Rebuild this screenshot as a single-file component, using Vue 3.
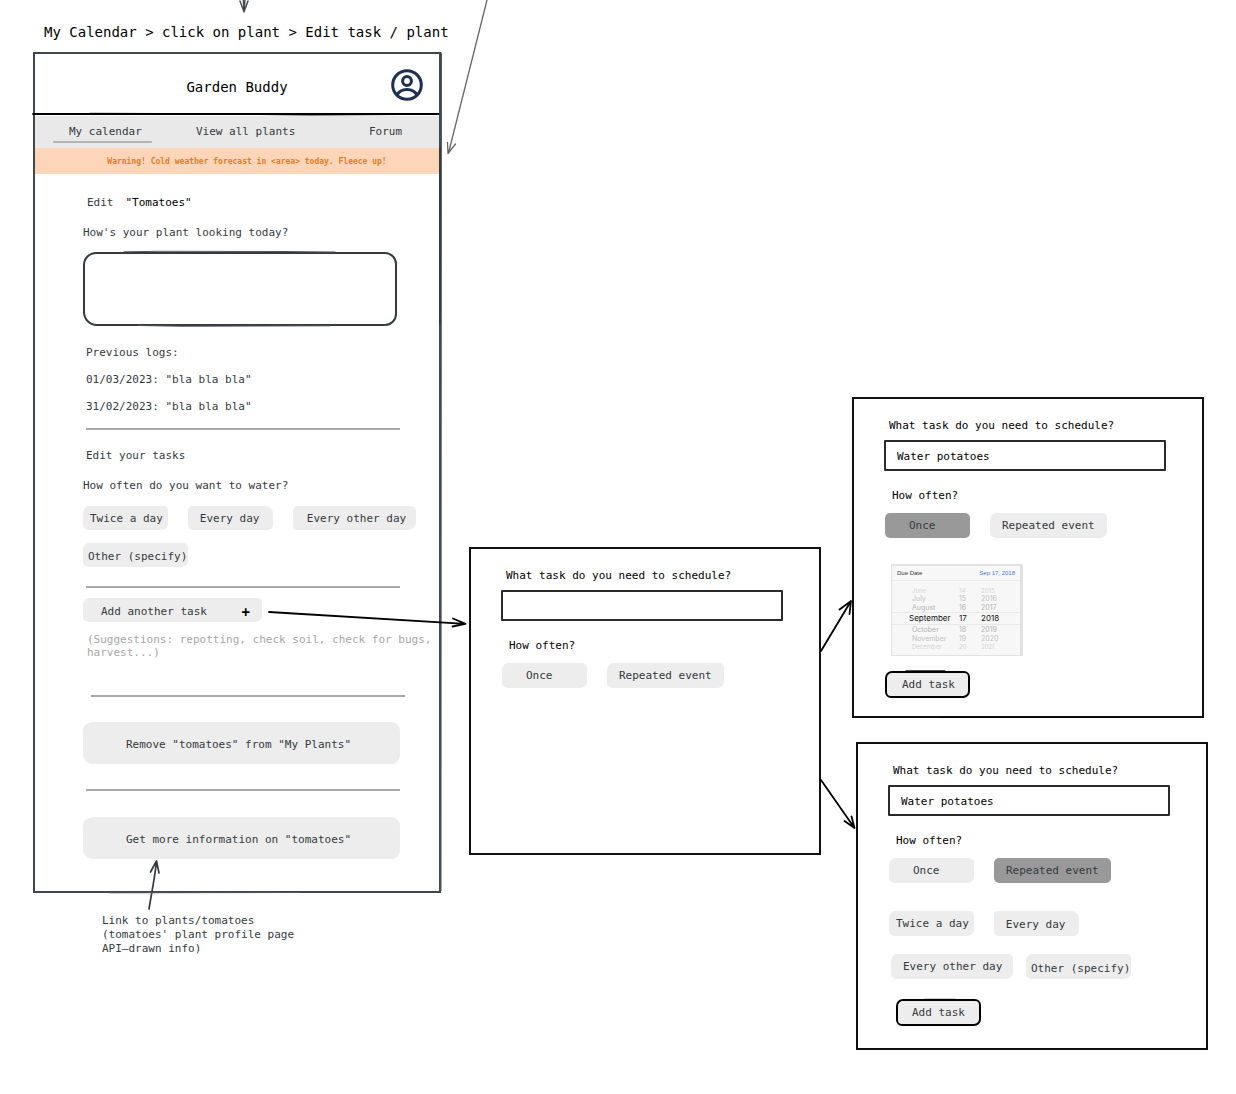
<script setup>
import { ref } from 'vue'

const logs = ['01/03/2023: "bla bla bla"', '31/02/2023: "bla bla bla"']
const log = ref('')
const emptyTask = ref('')
const onceTask = ref('Water potatoes')
const repeatTask = ref('Water potatoes')

const dates = [
  { m: 'June', d: '14', y: '2015', c: 'edge' },
  { m: 'July', d: '15', y: '2016', c: 'far' },
  { m: 'August', d: '16', y: '2017', c: 'near' },
  { m: 'September', d: '17', y: '2018', c: 'picked' },
  { m: 'October', d: '18', y: '2019', c: 'near' },
  { m: 'November', d: '19', y: '2020', c: 'far' },
  { m: 'December', d: '20', y: '2021', c: 'edge' }
]
</script>

<template>
  <main class="board">
    <section class="column first">
      <h1 class="flow-title">My Calendar &gt; click on plant &gt; Edit task / plant</h1>

      <article class="phone">
        <header class="top">
          <h2>Garden Buddy</h2>
          <button class="avatar" aria-label="Account">
            <svg width="32" height="32" viewBox="0 0 32 32" fill="none" stroke="#1d2f52" stroke-width="3">
              <circle cx="16" cy="16" r="14.3" />
              <circle cx="16" cy="12" r="4.4" />
              <path d="M6 26.3C7.8 22.4 11.3 20.6 16 20.6S24.2 22.4 26 26.3" />
            </svg>
          </button>
        </header>
        <nav class="tabs">
          <a href="#calendar" class="current">My calendar</a>
          <a href="#plants">View all plants</a>
          <a href="#forum">Forum</a>
        </nav>
        <p class="warning">Warning! Cold weather forecast in &lt;area&gt; today. Fleece up!</p>

        <div class="body">
          <h3 class="edit"><span>Edit</span><strong>"Tomatoes"</strong></h3>
          <label class="question" for="log">How's your plant looking today?</label>
          <textarea id="log" v-model="log"></textarea>

          <div class="logs">
            <p>Previous logs:</p>
            <p v-for="l in logs" :key="l">{{ l }}</p>
          </div>
          <hr class="after-logs" />

          <h3 class="tasks">Edit your tasks</h3>
          <p class="question">How often do you want to water?</p>
          <div class="chips">
            <button class="chip">Twice a day</button>
            <button class="chip day">Every day</button>
            <button class="chip other-day">Every other day</button>
            <button class="chip specify">Other (specify)</button>
          </div>
          <hr class="after-chips" />

          <button class="chip add-another"><span>Add another task</span><b>+</b></button>
          <p class="hint">(Suggestions: repotting, check soil, check for bugs, harvest...)</p>
          <hr class="after-hint" />
          <button class="chip large">Remove "tomatoes" from "My Plants"</button>
          <hr class="between" />
          <button class="chip large">Get more information on "tomatoes"</button>
        </div>
      </article>

      <p class="note">Link to plants/tomatoes<br />(tomatoes' plant profile page<br />API–drawn info)</p>
    </section>

    <section class="column second">
      <form class="dialog" @submit.prevent>
        <label for="task-a">What task do you need to schedule?</label>
        <input id="task-a" v-model="emptyTask" type="text" />
        <p class="often">How often?</p>
        <div class="choice">
          <button type="button" class="chip once">Once</button>
          <button type="button" class="chip repeat">Repeated event</button>
        </div>
      </form>
    </section>

    <section class="column third">
      <form class="dialog tall" @submit.prevent>
        <label for="task-b">What task do you need to schedule?</label>
        <input id="task-b" v-model="onceTask" type="text" />
        <p class="often">How often?</p>
        <div class="choice">
          <button type="button" class="chip once on" aria-pressed="true">Once</button>
          <button type="button" class="chip repeat">Repeated event</button>
        </div>
        <div class="picker">
          <div class="due"><span>Due Date</span><span class="value">Sep 17, 2018</span></div>
          <div class="wheel">
            <div v-for="r in dates" :key="r.m" class="date" :class="r.c">
              <span>{{ r.m }}</span><span>{{ r.d }}</span><span>{{ r.y }}</span>
            </div>
          </div>
        </div>
        <button class="chip add">Add task</button>
      </form>

      <form class="dialog lower" @submit.prevent>
        <label for="task-c">What task do you need to schedule?</label>
        <input id="task-c" v-model="repeatTask" type="text" />
        <p class="often">How often?</p>
        <div class="choice">
          <button type="button" class="chip once">Once</button>
          <button type="button" class="chip repeat on" aria-pressed="true">Repeated event</button>
        </div>
        <div class="choice interval">
          <button type="button" class="chip">Twice a day</button>
          <button type="button" class="chip day">Every day</button>
        </div>
        <div class="choice interval-more">
          <button type="button" class="chip every-other">Every other day</button>
          <button type="button" class="chip specify">Other (specify)</button>
        </div>
        <button class="chip add">Add task</button>
      </form>
    </section>

    <svg class="arrows" width="1236" height="1094" viewBox="0 0 1236 1094" fill="none" stroke-linecap="round" stroke-linejoin="round" aria-hidden="true">
      <g stroke="#444a50" stroke-width="1.4">
        <path d="M243.300 0 244 12M245 0 244 12M240 1 244 12 248 1" />
      </g>
      <g stroke="#666" stroke-width="1.3">
        <path d="M487 0 448.500 153M447.500 142.500 448 153.500 455.500 144" />
      </g>
      <g stroke="#343a40" stroke-width="1.7">
        <path d="M149 909C151 896 155 877 156.500 861M150.500 872 156.500 861 159 873" />
        <path d="M440 148V324" />
      </g>
      <g stroke="#50565c" stroke-width="1">
        <path d="M441.500 53 441 891" />
        <path d="M110 892.800 300 892.500" />
        <path d="M124 251.800 158 251.300 285 251.500 335 252" />
        <path d="M138 325.500 182 326.300 330 325.800" />
      </g>
      <g stroke="#000" stroke-width="1.8">
        <path d="M269 612 465 623.800M453 618.500 465.500 623.800 452.500 626.500" />
        <path d="M821 651 851 601M839.500 609.500 851 601 849.500 614" />
        <path d="M821 780 854.500 828M844.500 821 854.500 828 851.500 816.500" />
        <path d="M33 114H38" />
        <path d="M940 717.500H1120" stroke-width="1" />
        <path d="M90 113.300 160 113.500 310 115 400 114.500" stroke-width="1" />
        <path d="M906 670.800H945M915 697.500H950M915 1025.500H955M925 999.300H955" stroke-width="1" />
      </g>
    </svg>
  </main>
</template>

<style>
body {
  margin: 0;
  background: #fff;
}
</style>

<style scoped>
.board {
  position: relative;
  display: flex;
  align-items: flex-start;
  min-height: 100vh;
  padding-left: 33px;
  box-sizing: border-box;
  overflow: hidden;
  color: #343a40;
  font: 11px/14px "DejaVu Sans Mono", "Liberation Mono", monospace;
}
.board * {
  box-sizing: border-box;
}
h1, h2, h3, p {
  margin: 0;
  font-size: inherit;
  font-weight: 400;
}
button, input, textarea {
  font: inherit;
  color: inherit;
}
.column {
  flex: none;
}
.first {
  width: 408px;
  padding-top: 24px;
}
.second {
  width: 352px;
  margin-left: 28px;
  padding-top: 547px;
}
.third {
  width: 356px;
  margin-left: 31px;
  padding-top: 397px;
}
.flow-title {
  margin: 0 0 12px;
  padding-left: 11px;
  color: #000;
  font-size: 14px;
  line-height: 16px;
  white-space: nowrap;
}

.phone {
  border: 2px solid #41474d;
  background: #fff;
}
.top {
  position: relative;
  display: flex;
  align-items: center;
  justify-content: center;
  height: 61px;
  padding-top: 6px;
  border-bottom: 2px solid #000;
  color: #000;
}
.top h2 {
  font-size: 14px;
  line-height: 16px;
}
.avatar {
  position: absolute;
  top: 15px;
  right: 16px;
  height: 32px;
  padding: 0;
  border: 0;
  background: none;
}
.avatar svg {
  display: block;
}
.tabs {
  display: grid;
  grid-template-columns: 127fr 173fr 86fr;
  justify-items: start;
  height: 32px;
  margin-top: 1px;
  padding: 9px 0 0 18px;
  background: #e9e9e9;
}
.tabs a {
  height: 18px;
  padding: 0 10px 0 16px;
  color: inherit;
  text-decoration: none;
  white-space: nowrap;
}
.tabs .current {
  border-bottom: 2px solid #b4b4b4;
  border-radius: 1px;
}
.warning {
  height: 26px;
  padding-left: 20px;
  background: #fdd6ba;
  color: #e67a1c;
  font-size: 8px;
  font-weight: 700;
  line-height: 28px;
  text-align: center;
}
.body {
  display: flex;
  flex-direction: column;
  align-items: flex-start;
  padding: 22px 0 32px 48px;
}
.edit {
  display: flex;
  gap: 12px;
  padding-left: 4px;
}
.edit strong {
  color: #000;
  font-weight: 400;
}
.question {
  margin-top: 16px;
}
textarea {
  width: 314px;
  height: 74px;
  margin-top: 12px;
  border: 2px solid #343a40;
  border-radius: 13px 12px 12px 14px;
  background: #fff;
  resize: none;
}
.logs {
  display: grid;
  gap: 13px;
  margin-top: 20px;
  padding-left: 3px;
}
hr {
  width: 314px;
  height: 2px;
  margin: 0 0 0 3px;
  border: 0;
  background: #a9a9a9;
}
.after-logs {
  margin-top: 14px;
}
.tasks {
  margin-top: 19px;
  padding-left: 3px;
}
.chips {
  display: flex;
  flex-wrap: wrap;
  gap: 13px 20px;
  margin-top: 13px;
}
.chip {
  height: 24px;
  padding: 1px 5px 0 7px;
  border: 0;
  border-radius: 6px 5px 7px 6px / 7px 4px 6px 5px;
  background: #ededed;
  text-align: left;
  white-space: nowrap;
}
.chip.day {
  width: 85px;
  padding: 2px 12px 0;
  border-radius: 4px 8px 5px 5px;
}
.chip.other-day {
  width: 123px;
  padding: 1px 9px 0 14px;
  border-radius: 5px 6px 8px 4px;
}
.chip.specify {
  width: 105px;
  padding: 4px 1px 0 5px;
}
.after-chips {
  margin-top: 19px;
}
.add-another {
  display: flex;
  align-items: center;
  justify-content: space-between;
  width: 179px;
  margin-top: 10px;
  padding: 3px 12px 0 18px;
}
.add-another b {
  color: #000;
  font-size: 14px;
}
.hint {
  width: 350px;
  margin-top: 11px;
  padding-left: 4px;
  color: #a6a6a6;
  line-height: 13px;
}
.after-hint {
  margin: 36px 0 25px 8px;
}
.large {
  width: 317px;
  height: 42px;
  padding: 3px 6px 0 0;
  border-radius: 12px 9px 8px 9px / 8px 9px 9px 10px;
  text-align: center;
}
.between {
  margin-top: 25px;
  margin-bottom: 26px;
}
.note {
  margin: 21px 0 0 69px;
}

.dialog {
  display: flex;
  flex-direction: column;
  align-items: flex-start;
  width: 352px;
  min-height: 308px;
  padding: 20px 30px 18px;
  border: 2px solid #111;
  background: #fff;
  color: #000;
}
.dialog label {
  padding-left: 5px;
}
.dialog input {
  width: 282px;
  height: 31px;
  margin-top: 7px;
  padding: 2px 11px 0;
  border: 2px solid #2b2b2b;
  border-radius: 1px;
  background: #fff;
}
.often {
  margin-top: 18px;
  padding-left: 8px;
}
.choice {
  display: flex;
  gap: 20px;
  margin-top: 10px;
  padding-left: 1px;
}
.dialog .chip {
  height: 25px;
  color: #343a40;
}
.once {
  width: 85px;
  padding-left: 24px;
}
.repeat {
  width: 117px;
  padding-left: 12px;
}
.dialog .on {
  background: #999;
  border-radius: 5px;
}
.picker {
  width: 132px;
  height: 92px;
  margin: 26px 0 0 7px;
  border: solid #e2e2e2;
  border-width: 2px 3px 1px 1px;
  background: #f7f7f7;
  color: #333;
  font: 6px/14px "Liberation Sans", Inter, sans-serif;
}
.due {
  display: flex;
  justify-content: space-between;
  height: 15px;
  padding: 0 5px;
  border-bottom: 1px solid #ececec;
}
.due .value {
  color: #3b7dd8;
}
.wheel {
  padding-top: 6px;
  font-family: Inter, "Liberation Sans", sans-serif;
}
.date {
  display: grid;
  grid-template-columns: 36px 30px 1fr;
  height: 9px;
  padding-left: 20px;
  overflow: hidden;
  color: #b5b5b5;
  font-size: 7px;
  line-height: 9px;
}
.date span:nth-child(2) {
  padding-left: 11px;
}
.date span:nth-child(3) {
  padding-left: 3px;
}
.date.edge {
  height: 7px;
  color: #d4d4d4;
  font-size: 6px;
  line-height: 7px;
}
.date.far {
  color: #c2c2c2;
}
.date.picked {
  grid-template-columns: 39px 30px 1fr;
  height: 13px;
  padding-left: 17px;
  border: solid #e8e8e8;
  border-width: 1px 0;
  color: #111;
  font-size: 8px;
  line-height: 11px;
}
.dialog .add {
  width: 85px;
  height: 27px;
  margin: 15px 0 0 1px;
  padding: 1px 0 0 15px;
  border: 2px solid #000;
  border-radius: 7px 6px 7px 6px;
}
.lower {
  margin: 24px 0 0 4px;
  padding-bottom: 21px;
}
.interval {
  margin-top: 28px;
}
.interval-more {
  gap: 13px;
  margin-top: 18px;
  padding-left: 3px;
}
.every-other {
  width: 122px;
  padding-left: 12px;
}
.dialog.lower .add {
  margin: 20px 0 0 8px;
  padding-left: 14px;
}

.arrows {
  position: absolute;
  top: 0;
  left: 0;
  pointer-events: none;
}
</style>
